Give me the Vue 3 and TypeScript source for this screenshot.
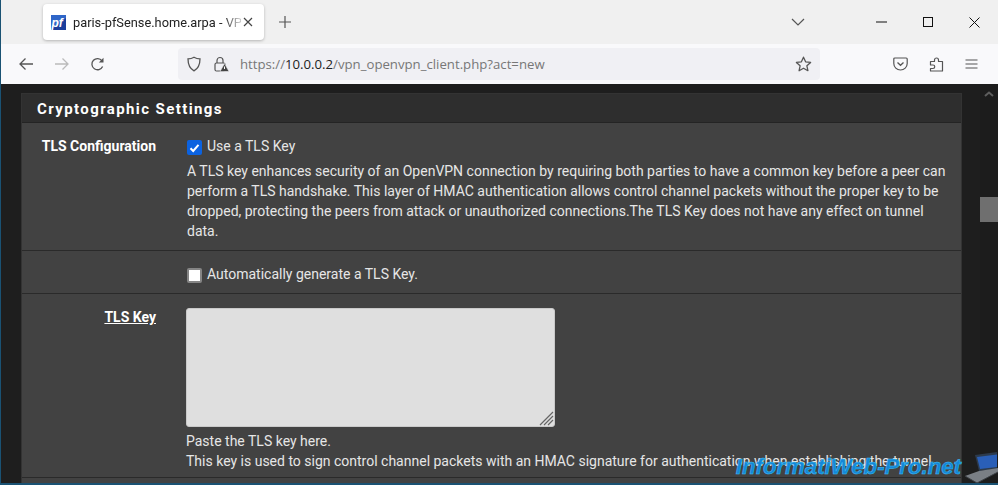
<script setup lang="ts">
const desc: string[] = [
  'A TLS key enhances security of an OpenVPN connection by requiring both parties to have a common key before a peer can',
  'perform a TLS handshake. This layer of HMAC authentication allows control channel packets without the proper key to be',
  'dropped, protecting the peers from attack or unauthorized connections.The TLS Key does not have any effect on tunnel',
  'data.',
]
</script>

<template>
  <div class="win">
    <div class="tabbar">
      <div class="tab">
        <svg class="fav" width="15" height="15" viewBox="0 0 15 15">
          <rect width="15" height="15" fill="#2f66c8" />
          <path d="M0 15 L15 3 V15Z" fill="#1c3f9c" />
          <text x="0.5" y="12" font-size="12" font-weight="700" font-style="italic" font-family="Liberation Sans" fill="#fff">pf</text>
        </svg>
        <span class="tabtitle">paris-pfSense.home.arpa - VPN</span>
        <svg width="10" height="10" viewBox="0 0 10 10" class="tabx"><path d="M1 1L9 9M9 1L1 9" stroke="#444" stroke-width="1.2" /></svg>
      </div>
      <svg class="plus" width="14" height="14" viewBox="0 0 14 14"><path d="M7 1V13M1 7H13" stroke="#555" stroke-width="1.2" /></svg>
      <div class="grow"></div>
      <svg class="chev" width="14" height="8" viewBox="0 0 14 8"><path d="M1 1L7 7L13 1" fill="none" stroke="#555" stroke-width="1.2" /></svg>
      <svg class="wmin" width="11" height="2" viewBox="0 0 11 2"><path d="M0 1H11" stroke="#111" stroke-width="1" /></svg>
      <svg class="wmax" width="10" height="10" viewBox="0 0 10 10"><rect x="0.5" y="0.5" width="9" height="9" fill="none" stroke="#111" /></svg>
      <svg class="wclose" width="11" height="11" viewBox="0 0 11 11"><path d="M0.5 0.5L10.5 10.5M10.5 0.5L0.5 10.5" stroke="#111" stroke-width="1" /></svg>
    </div>
    <div class="toolbar">
      <svg class="nav back" width="16" height="14" viewBox="0 0 16 14"><path d="M15 7H2M7.5 1.5L2 7L7.5 12.5" fill="none" stroke="#555" stroke-width="1.3" /></svg>
      <svg class="nav fwd" width="16" height="14" viewBox="0 0 16 14"><path d="M1 7H14M8.5 1.5L14 7L8.5 12.5" fill="none" stroke="#bbb" stroke-width="1.3" /></svg>
      <svg class="nav reload" width="15" height="15" viewBox="0 0 15 15"><path d="M12.6 9.500A5.600 5.600 0 1 1 12 3.800" fill="none" stroke="#555" stroke-width="1.3" /><path d="M13.500 0.800V5.500H8.800Z" fill="#555" /></svg>
      <div class="urlbar">
        <svg width="14" height="16" viewBox="0 0 14 16" class="shield"><path d="M7 1.200C5 2.400 3 2.800 1 2.800C1 8 2.500 12.500 7 14.800C11.500 12.500 13 8 13 2.800C11 2.800 9 2.400 7 1.200Z" fill="none" stroke="#555" stroke-width="1.3" /></svg>
        <svg width="15" height="16" viewBox="0 0 15 16" class="lock">
          <rect x="1" y="7" width="10" height="8" rx="1.500" fill="none" stroke="#555" stroke-width="1.2" />
          <path d="M3 7V4.500A3 3 0 0 1 9 4.500V7" fill="none" stroke="#555" stroke-width="1.2" />
          <path d="M10.500 7.500L15 15.500H6Z" fill="#444" stroke="#f0f0f4" stroke-width="0.6" />
          <path d="M10.500 10.500V13" stroke="#fff" stroke-width="1" />
        </svg>
        <div class="url"><span class="dim">https://</span><span class="host">10.0.0.2</span><span class="dim">/vpn_openvpn_client.php?act=new</span></div>
        <svg width="17" height="16" viewBox="0 0 17 16" class="star"><path d="M8.500 1.200L10.600 5.800L15.600 6.400L11.900 9.800L12.900 14.700L8.500 12.200L4.100 14.700L5.100 9.800L1.400 6.400L6.400 5.800Z" fill="none" stroke="#555" stroke-width="1.3" stroke-linejoin="round" /></svg>
      </div>
      <svg width="15" height="14" viewBox="0 0 15 14" class="pocket"><path d="M1.800 1H13.200A1 1 0 0 1 14.200 2V6.500A6.700 6.500 0 0 1 0.800 6.500V2A1 1 0 0 1 1.800 1Z" fill="none" stroke="#555" stroke-width="1.2" /><path d="M4.500 5.500L7.500 8.300L10.500 5.500" fill="none" stroke="#555" stroke-width="1.3" /></svg>
      <svg width="15" height="15" viewBox="0 0 15 15" class="ext"><path d="M1 4.500H5V3A2 2 0 0 1 9 3V4.500H13V14H1V11.500H3.500A1.700 1.700 0 0 0 3.500 8H1Z" transform="translate(0.5 0)" fill="none" stroke="#555" stroke-width="1.2" stroke-linejoin="round" /></svg>
      <svg width="13" height="10" viewBox="0 0 13 10" class="menu"><path d="M0.500 1H12.500M0.500 5H12.500M0.500 9H12.500" stroke="#555" stroke-width="1.1" /></svg>
    </div>
    <div class="page">
      <div class="content">
        <section class="panel">
          <h2 class="phead">Cryptographic Settings</h2>
          <div class="row r1">
            <div class="lab">TLS Configuration</div>
            <div class="val">
              <label class="chk"><span class="box on"><svg width="11" height="10" viewBox="0 0 11 10"><path d="M1.500 5.200L4.200 8L9.500 1.800" fill="none" stroke="#fff" stroke-width="2" /></svg></span>Use a TLS Key</label>
              <p class="desc"><span v-for="l in desc" :key="l" class="ln">{{ l }}</span></p>
            </div>
          </div>
          <div class="row r2">
            <div class="lab"></div>
            <div class="val"><label class="chk"><span class="box"></span>Automatically generate a TLS Key.</label></div>
          </div>
          <div class="row r3">
            <div class="lab"><u>TLS Key</u></div>
            <div class="val v3">
              <div class="ta">
                <svg class="grip" width="16" height="16" viewBox="0 0 16 16"><path d="M2 15L15 2M6 15L15 6M10 15L15 10" stroke="#666" stroke-width="1.2" /></svg>
              </div>
              <p class="hint"><span class="ln">Paste the TLS key here.</span><span class="ln">This key is used to sign control channel packets with an HMAC signature for authentication when establishing the tunnel.</span></p>
            </div>
          </div>
        </section>
      </div>
      <div class="sbar">
        <svg class="sup" width="10" height="6" viewBox="0 0 10 6"><path d="M1 5L5 1.500L9 5" fill="none" stroke="#5d5d5d" stroke-width="2" /></svg>
        <div class="thumb"></div>
      </div>
      <div class="wm">
        <span class="wmtext">InformatiWeb-Pro.net</span>
        <svg width="34" height="31" viewBox="0 0 34 31">
          <path d="M11 3L33 0V17L15 19Z" fill="#2d3b4d" />
          <path d="M13 5L33 2.500V15L16 17Z" fill="#2a5fb8" />
          <path d="M1 24L15 19L34 16V20L13 31Z" fill="#7a7f85" />
          <path d="M1 24L13 31L34 20" fill="none" stroke="#3b3f44" stroke-width="1" />
        </svg>
      </div>
    </div>
  </div>
</template>

<style>
html, body { margin: 0; padding: 0; overflow: hidden; background: #1e1e1e; }
</style>

<style scoped>
.win { width: 998px; height: 485px; display: flex; flex-direction: column; overflow: hidden; font-family: "Open Sans", "Noto Sans", sans-serif; border-left: 1px solid #1a5273; border-bottom: 2px solid #1a5273; box-sizing: border-box; }
.tabbar { height: 44px; background: #f0f0f0; display: flex; align-items: center; flex: none; position: relative; }
.tab { margin-left: 42px; width: 221px; height: 36px; background: #fff; border-radius: 4px; box-shadow: 0 1px 3px rgba(0,0,0,.25); display: flex; align-items: center; box-sizing: border-box; padding-left: 8px; position: relative; overflow: hidden; }
.fav { flex: none; margin-right: 7px; }
.tabtitle { font-family: Roboto, sans-serif; font-size: 12.800px; color: #222; white-space: nowrap; width: 168px; flex: none; -webkit-mask-image: linear-gradient(to right, #000 150px, rgba(0,0,0,.25) 166px); mask-image: linear-gradient(to right, #000 150px, rgba(0,0,0,.25) 166px); }
.tabx { position: absolute; right: 11px; top: 13px; }
.plus { margin-left: 14px; }
.grow { flex: 1; }
.chev { margin-right: 71px; margin-top: -1px; }
.wmin { margin-right: 36px; }
.wmax { margin-right: 36px; }
.wclose { margin-right: 18px; }
.toolbar { height: 40px; background: #f9f9fb; display: flex; align-items: center; flex: none; position: relative; }
.nav { flex: none; }
.back { margin-left: 17px; }
.fwd { margin-left: 20px; }
.reload { margin-left: 20px; }
.urlbar { width: 642px; height: 32px; margin-left: 73px; background: #f0f0f4; border-radius: 4px; display: flex; align-items: center; box-sizing: border-box; }
.shield { margin-left: 9px; flex: none; }
.lock { margin-left: 13px; flex: none; }
.url { margin-left: 11px; font-family: "Open Sans", sans-serif; font-size: 13.2px; white-space: nowrap; flex: 1; }
.dim { color: #777; }
.host { color: #222; }
.star { margin-right: 8px; flex: none; }
.pocket { margin-left: 73px; flex: none; }
.ext { margin-left: 21px; flex: none; }
.menu { margin-left: 21px; flex: none; }
.page { flex: 1; background: #1e1e1e; display: flex; position: relative; overflow: hidden; font-family: Roboto, sans-serif; }
.content { width: 979px; box-sizing: border-box; padding: 9px 18px 0 20px; flex: none; background: #1e1e1e; }
.panel { background: #424242; border: 1px solid #333; border-bottom: none; height: 420px; }
.phead { margin: 0; height: 28px; line-height: 30px; background: #2e2e2e; color: #fff; font-size: 15px; font-weight: 700; letter-spacing: 1.4px; padding-left: 15px; border-bottom: 1px solid #242424; }
.row { display: flex; border-bottom: 1px solid #2a2a2a; box-sizing: border-box; }
.r1 { height: 128px; }
.r2 { height: 43px; }
.r3 { height: 184px; }
.lab { width: 134px; flex: none; text-align: right; color: #fff; font-size: 14px; font-weight: 700; padding-top: 14px; line-height: 18px; }
.val { padding-left: 31px; color: #e6e6e6; font-size: 14px; flex: 1; }
.chk { display: flex; align-items: center; height: 20px; margin-top: 13px; }
.box { width: 11px; height: 11px; background: #fff; border: 2px solid #858585; border-radius: 2px; margin-right: 5px; margin-top: 3px; display: flex; align-items: center; justify-content: center; }
.box.on { background: #0b62e0; border-color: #0b62e0; }
.desc { margin: 5px 0 0; line-height: 20px; }
.ln { display: block; white-space: nowrap; }
.v3 { padding-left: 30px; }
.ta { width: 369px; height: 119px; margin-top: 14px; background: #dfdfdf; border: 1px solid #c9c9c9; border-radius: 3px; box-sizing: border-box; position: relative; }
.grip { position: absolute; right: 0; bottom: 0; }
.hint { margin: 4px 0 0; line-height: 20px; }
.sbar { width: 18px; flex: none; background: #1c1c1c; position: relative; }
.sup { position: absolute; left: 4px; top: 7px; }
.thumb { position: absolute; left: 0; right: 0; top: 113px; height: 25px; background: #6f6f6f; }
.wm { position: absolute; right: 0; bottom: 0; display: flex; align-items: flex-end; gap: 3px; pointer-events: none; }
.wmtext { font: italic 700 22.200px "Liberation Sans", sans-serif; color: #1487d8; -webkit-text-stroke: 0.5px #3fc0f5; margin-bottom: 3px; white-space: nowrap; }
</style>
